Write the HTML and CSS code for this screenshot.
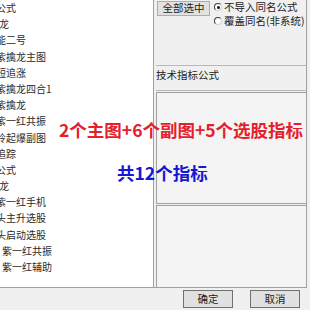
FILE: index.html
```html
<!doctype html>
<html>
<head>
<meta charset="utf-8">
<meta name="viewport" content="width=device-width,initial-scale=1.0" />
<title>导入公式</title>
<link rel="stylesheet" href="styles.css">
</head>
<body>
  <div id="dialog">
    <div class="main">
      <ul class="formula-list">
        <li>公式</li>
        <li class="flush">龙</li>
        <li>能二号</li>
        <li>紫擒龙主图</li>
        <li>短追涨</li>
        <li>紫擒龙四合1</li>
        <li>紫擒龙</li>
        <li>紫一红共振</li>
        <li>拎起爆副图</li>
        <li>追踪</li>
        <li>公式</li>
        <li class="flush">龙</li>
        <li>紫一红手机</li>
        <li>头主升选股</li>
        <li>头启动选股</li>
        <li class="shift">紫一红共振</li>
        <li class="shift">紫一红辅助</li>
      </ul>
      <div class="side">
        <div class="opts">
          <button class="btn btn-all">全部选中</button>
          <div class="radios">
            <label class="radio checked"><span class="dot"></span>不导入同名公式</label>
            <label class="radio"><span class="dot"></span>覆盖同名(非系统)</label>
          </div>
        </div>
        <div class="caption">技术指标公式</div>
        <div class="box box-desc"></div>
        <div class="box box-extra"></div>
      </div>
    </div>
    <div class="footer">
      <button class="btn">确定</button>
      <button class="btn">取消</button>
    </div>
    <div class="note note-red">2个主图+6个副图+5个选股指标</div>
    <div class="note note-blue">共12个指标</div>
  </div>
</body>
</html>
```

FILE: styles.css
```css
html, body {
  margin: 0;
  padding: 0;
}

body {
  width: 310px;
  height: 310px;
  overflow: hidden;
  background: #f0f0f0;
  color: #222;
  font-family: "Noto Sans CJK SC", sans-serif;
}

#dialog {
  position: relative;
  width: 310px;
  height: 310px;
}

.main {
  display: flex;
  width: 307px;
  height: 287px;
  border-bottom: 1px solid #a0a0a0;
}

/* formula list, scrolled a little to the right */
.formula-list {
  list-style: none;
  margin: 0;
  padding: 0;
  width: 153px;
  background: #fff;
  border-right: 1px solid #a0a0a0;
  overflow: hidden;
  font-size: 10px;
  line-height: 16.2px;
  color: #2a2a2a;
}

.formula-list li {
  height: 16.2px;
  white-space: nowrap;
  text-indent: -4px;
}

.formula-list li.flush {
  text-indent: -1px;
}

.formula-list li.shift {
  text-indent: 2px;
}

.side {
  flex: 1;
  display: flex;
  flex-direction: column;
  padding-left: 2px;
  border-right: 1px solid #a0a0a0;
}

.opts {
  display: flex;
  align-items: flex-start;
  gap: 4px;
  height: 65px;
  padding: 1px 0 0 1px;
  box-sizing: border-box;
}

.radios {
  display: flex;
  flex-direction: column;
  margin-top: -1px;
}

.radio {
  display: flex;
  align-items: center;
  gap: 2px;
  height: 14px;
  font-size: 10.5px;
  line-height: 14px;
  white-space: nowrap;
}

.radio .dot {
  position: relative;
  width: 8px;
  height: 8px;
  box-sizing: border-box;
  border-radius: 50%;
  border: 1px solid;
  border-color: #3c3c3c #d0d0d0 #d0d0d0 #3c3c3c;
  background: #fff;
}

.radio.checked .dot::after {
  content: "";
  position: absolute;
  left: 1.5px;
  top: 1.5px;
  width: 3px;
  height: 3px;
  border-radius: 50%;
  background: #111;
}

.caption {
  height: 24px;
  border-top: 1px solid #b8b8b8;
  border-bottom: 1px solid #b8b8b8;
  font-size: 10.5px;
  line-height: 18px;
  white-space: nowrap;
}

.box {
  margin-top: 1px;
  border: 1px solid #a0a0a0;
  border-right: 0;
  background: #f4f4f4;
}

.box-desc {
  height: 110px;
}

.box-extra {
  flex: 1;
  border-bottom: 0;
}

.footer {
  display: flex;
  justify-content: flex-end;
  gap: 17px;
  padding: 2px 10px 0 0;
}

.btn {
  width: 50px;
  height: 18px;
  padding: 0;
  border: 1px solid #707070;
  background: #e1e1e1;
  color: #222;
  font-family: "Noto Sans CJK SC", sans-serif;
  font-size: 10.5px;
  line-height: 1;
}

.btn-all {
  width: 53px;
  height: 15px;
  border-color: #adadad;
}

.note {
  position: absolute;
  font-size: 17.5px;
  font-weight: bold;
  line-height: 1;
  white-space: nowrap;
}

.note-red {
  left: 59px;
  top: 121px;
  color: #e4202c;
}

.note-blue {
  left: 117px;
  top: 164px;
  color: #1616d4;
}
```
